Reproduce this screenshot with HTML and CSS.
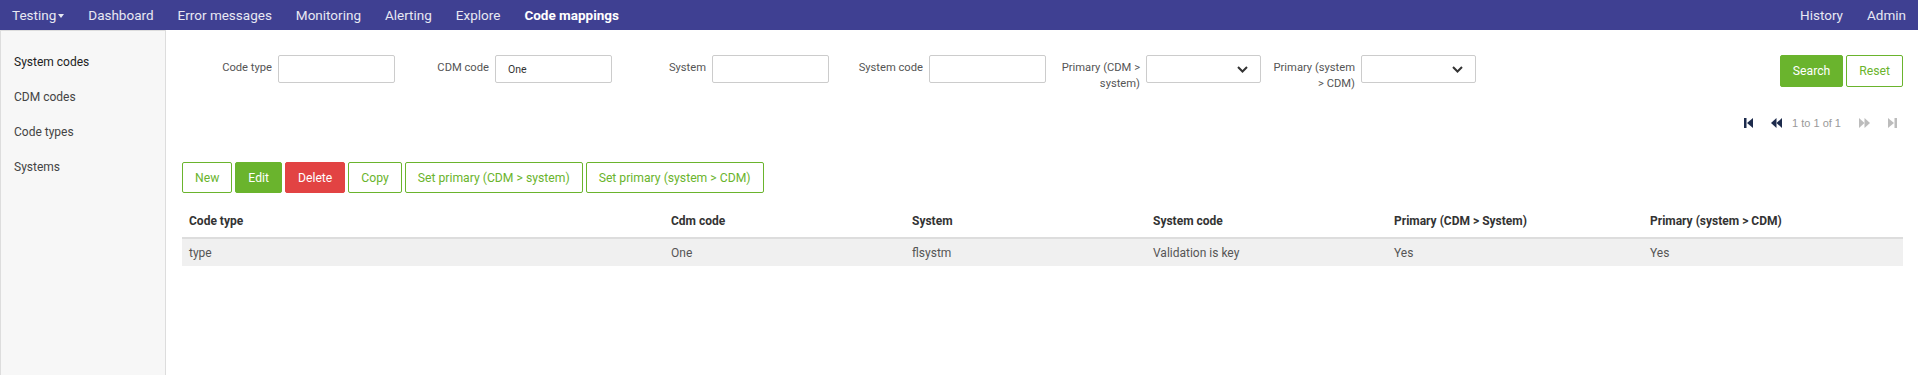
FILE: index.html
```html
<!DOCTYPE html>
<html lang="en">
<head>
    <meta charset="UTF-8">
    <title>Code mappings</title>
    <link rel="stylesheet" href="styles.css">
</head>
<body>

    <nav class="topbar">
        <ul class="nav">
            <li><a href="#">Testing<span class="caret"></span></a></li>
            <li><a href="#">Dashboard</a></li>
            <li><a href="#">Error messages</a></li>
            <li><a href="#">Monitoring</a></li>
            <li><a href="#">Alerting</a></li>
            <li><a href="#">Explore</a></li>
            <li class="active"><a href="#">Code mappings</a></li>
        </ul>
        <ul class="nav">
            <li><a href="#">History</a></li>
            <li><a href="#">Admin</a></li>
        </ul>
    </nav>

    <div class="layout">
        <aside class="sidebar">
            <a href="#" class="active">System codes</a>
            <a href="#">CDM codes</a>
            <a href="#">Code types</a>
            <a href="#">Systems</a>
        </aside>

        <main class="content">
            <form class="filters">
                <div class="field">
                    <label>Code type</label>
                    <input type="text">
                </div>
                <div class="field">
                    <label>CDM code</label>
                    <input type="text" value="One">
                </div>
                <div class="field">
                    <label>System</label>
                    <input type="text">
                </div>
                <div class="field">
                    <label>System code</label>
                    <input type="text">
                </div>
                <div class="field">
                    <label>Primary (CDM &gt; system)</label>
                    <div class="select">
                        <svg width="11" height="7" viewBox="0 0 11 7"><polyline points="1,1 5.5,5.5 10,1" fill="none" stroke="#333" stroke-width="2"/></svg>
                    </div>
                </div>
                <div class="field">
                    <label>Primary (system &gt; CDM)</label>
                    <div class="select">
                        <svg width="11" height="7" viewBox="0 0 11 7"><polyline points="1,1 5.5,5.5 10,1" fill="none" stroke="#333" stroke-width="2"/></svg>
                    </div>
                </div>
                <div class="form-actions">
                    <button type="button" class="btn btn-green">Search</button>
                    <button type="button" class="btn btn-outline">Reset</button>
                </div>
            </form>

            <div class="pager">
                <svg class="pg-on" width="9" height="10" viewBox="0 0 9 10"><rect x="0" y="0" width="2.5" height="10"/><polygon points="9,0 9,10 3,5"/></svg>
                <svg class="pg-on" width="11" height="10" viewBox="0 0 11 10"><polygon points="5.5,0 5.5,10 0,5"/><polygon points="11,0 11,10 5.5,5"/></svg>
                <span class="pg-text">1 to 1 of 1</span>
                <svg class="pg-off" width="11" height="10" viewBox="0 0 11 10"><polygon points="0,0 0,10 5.5,5"/><polygon points="5.5,0 5.5,10 11,5"/></svg>
                <svg class="pg-off" width="9" height="10" viewBox="0 0 9 10"><polygon points="0,0 0,10 6,5"/><rect x="6.5" y="0" width="2.5" height="10"/></svg>
            </div>

            <div class="toolbar">
                <button class="btn btn-outline">New</button>
                <button class="btn btn-green">Edit</button>
                <button class="btn btn-red">Delete</button>
                <button class="btn btn-outline">Copy</button>
                <button class="btn btn-outline">Set primary (CDM &gt; system)</button>
                <button class="btn btn-outline">Set primary (system &gt; CDM)</button>
            </div>

            <table class="grid">
                <thead>
                    <tr>
                        <th>Code type</th>
                        <th>Cdm code</th>
                        <th>System</th>
                        <th>System code</th>
                        <th>Primary (CDM &gt; System)</th>
                        <th>Primary (system &gt; CDM)</th>
                    </tr>
                </thead>
                <tbody>
                    <tr>
                        <td>type</td>
                        <td>One</td>
                        <td>flsystm</td>
                        <td>Validation is key</td>
                        <td>Yes</td>
                        <td>Yes</td>
                    </tr>
                </tbody>
            </table>
        </main>
    </div>

</body>
</html>
```

FILE: styles.css
```css
* { box-sizing: border-box; }
body { margin: 0; font-family: Roboto, "Noto Sans", sans-serif; font-size: 13px; color: #333; background: #fff; }
a { text-decoration: none; color: inherit; }

/* top navigation */
.topbar { display: flex; justify-content: space-between; height: 30px; background-color: #3f4092; }
.nav { display: flex; list-style: none; margin: 0; padding: 0; }
.nav a { display: block; line-height: 30px; padding: 0 12px; color: #e8e8f2; font-size: 13.5px; }
.nav .active a { color: #fff; font-weight: bold; }
.caret { display: inline-block; margin-left: 2px; vertical-align: middle; border-top: 4px solid #e8e8f2; border-left: 3px solid transparent; border-right: 3px solid transparent; }

/* page layout */
.layout { display: flex; min-height: calc(100vh - 30px); }
.sidebar { width: 166px; flex-shrink: 0; background-color: #f7f7f7; border: 1px solid #ddd; border-bottom: none; padding-top: 14px; }
.sidebar a { display: block; height: 35px; line-height: 35px; padding-left: 13px; color: #444; font-size: 12px; }
.sidebar a.active { color: #222; }
.content { flex: 1; padding: 0 15px 0 16px; }

/* filters */
.filters { display: flex; align-items: flex-start; height: 32px; margin-top: 25px; padding-left: 6px; }
.field { display: flex; align-items: flex-start; margin-right: 10px; }
.field label { width: 84px; margin-right: 6px; padding-top: 5px; text-align: right; line-height: 16px; font-size: 11.2px; color: #555; }
.field input, .select { width: 117px; height: 28px; border: 1px solid #ccc; border-radius: 2px; background: #fff; }
.field input { padding: 0 12px; font-family: inherit; font-size: 10.5px; color: #333; }
.select { display: flex; align-items: center; justify-content: flex-end; padding-right: 12px; width: 115px; }
.form-actions { display: flex; gap: 3px; margin-left: auto; }
.form-actions .btn { height: 32px; padding: 0 12px; }

/* pagination */
.pager { display: flex; justify-content: flex-end; align-items: center; gap: 10px; height: 16px; margin-top: 28px; padding-right: 6px; }
.pg-on { fill: #1d2b4c; }
.pg-off { fill: #bcbcbc; margin-left: 8px; }
.pg-on + .pg-on { margin-left: 8px; }
.pg-text { font-family: "Liberation Sans", Arial, sans-serif; font-size: 11px; color: #999; }

/* buttons */
.toolbar { display: flex; gap: 3px; margin-top: 31px; }
.btn { height: 31px; padding: 0 12px; border: 1px solid #6ab42d; border-radius: 2px; font-family: inherit; font-size: 12.2px; cursor: pointer; }
.btn-green { background-color: #6ab42d; color: #fff; }
.btn-outline { background-color: #fff; color: #6ab42d; }
.btn-red { background-color: #e24343; border-color: #e24343; color: #fff; }

/* results table */
.grid { width: 100%; margin-top: 12px; border-collapse: collapse; table-layout: fixed; font-size: 12px; }
.grid th { height: 33px; padding: 0 7px; text-align: left; font-weight: bold; color: #333; border-bottom: 2px solid #ddd; }
.grid td { height: 28px; padding: 0 7px; color: #555; background-color: #f0f0f0; }
.grid th:nth-child(1) { width: 482px; }
.grid th:nth-child(2), .grid th:nth-child(3), .grid th:nth-child(4) { width: 241px; }
.grid th:nth-child(5) { width: 256px; }
```
